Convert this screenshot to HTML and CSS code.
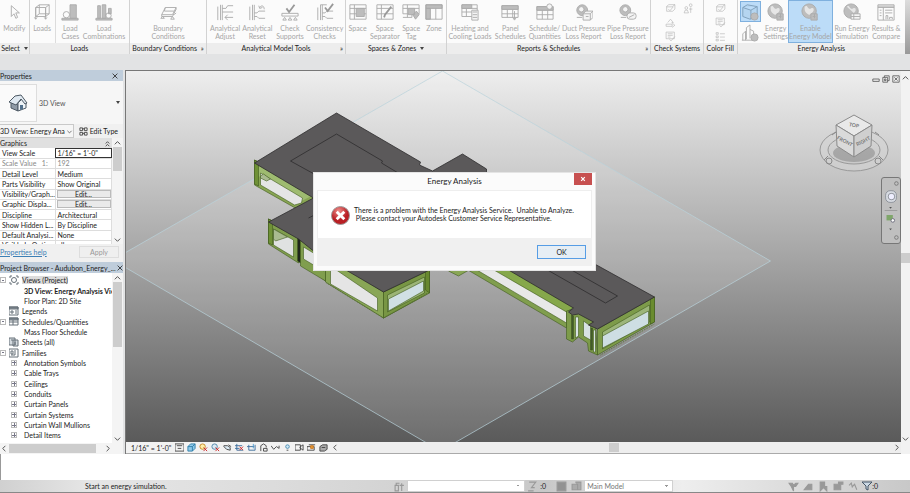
FILE: index.html
```
<!DOCTYPE html>
<html lang="en">
<head>
<meta charset="utf-8">
<title>Energy Analysis</title>
<link rel="stylesheet" href="styles.css">
</head>
<body>
<svg class="defs" aria-hidden="true">
  <symbol id="i-cursor" viewBox="0 0 20 20"><path d="M7 3v12l3-3 2 5 2-1-2-5h4z"/></symbol>
  <symbol id="i-loads" viewBox="0 0 20 20"><path d="M3 5l4-3h11v10l-4 3H3zM3 5h11l4-3M14 5v10M7 2v10h11M3 15l4-3M3 5v13M14 5v13M1.500 16L3 18l1.500-2M12.500 16l1.500 2 1.500-2"/></symbol>
  <symbol id="i-cases" viewBox="0 0 20 20"><path class="s" d="M10 2h7v15h-7zM1 17h18v2H1z"/><circle cx="6" cy="13" r="3.500"/></symbol>
  <symbol id="i-combo" viewBox="0 0 20 20"><path class="s" d="M3 3h3v14H3zM8 2h4v15H8zM15 6h3v6h-3zM1 17h18v2H1z"/><circle cx="15" cy="14" r="3"/></symbol>
  <symbol id="i-boundary" viewBox="0 0 20 20"><path d="M3 13l4-8h12l-4 8zM7 5l-1 4h11M3 13v2h12l4-8V5M2 17l2-2 2 2zM13 18l2-3 2 3zM17 13l2-2"/></symbol>
  <symbol id="i-adjust" viewBox="0 0 20 20"><path d="M2 4v15M5 2v17M7 2v17M7 6h4l2-3h6M7 10h12M10 16h9M13 13l-3 3 3 3"/></symbol>
  <symbol id="i-reset" viewBox="0 0 20 20"><path d="M2 4v15M5 2v17M7 2v17M7 11h3l2-2h7M7 15h3l2 2h7M12 3l1 3 3-1M13 5c2-3 5-2 5 2"/></symbol>
  <symbol id="i-check" viewBox="0 0 20 20"><path class="b" d="M6 6l3 4 6-8"/><path d="M1 11.500h18v3H1zM2 19l2-3 2 3zM8 19l2-3 2 3zM14 19l2-3 2 3z"/></symbol>
  <symbol id="i-consist" viewBox="0 0 20 20"><path d="M2 5v14M5 2v17M7 2v17M7 11h3l2-2h7M7 15h3l2 2h7M5 2h7"/><path class="b" d="M10 5l3 4 6-8"/></symbol>
  <symbol id="i-space" viewBox="0 0 20 20"><path d="M1 2h18v16H1zM1 6h18M6 2v16M1 12h18"/><path class="s" d="M8 6h9v9H8z"/></symbol>
  <symbol id="i-sep" viewBox="0 0 20 20"><path d="M1 2h18v16H1zM1 6h18M6 2v16M1 12h18"/><path class="b" d="M17 4l-7 9-1 3"/></symbol>
  <symbol id="i-tag" viewBox="0 0 20 20"><path d="M1 2h18v10H1zM1 6h18M6 2v14M1 16h10V7"/><path class="s" d="M7 6h7v7H7zM12 13l4-4 3 4-4 5z"/></symbol>
  <symbol id="i-zone" viewBox="0 0 20 20"><path class="s" d="M1 2h18v4H1zM1 6h5v12H1z"/><path d="M1 2h18v16H1zM12 6v12"/></symbol>
  <symbol id="i-calc" viewBox="0 0 20 20"><path d="M1 2h17v13H1zM1 6h17M6 2v13M1 10h17"/><path class="s" d="M1 2h11v4H1z"/><path class="p" d="M12 8h7v11h-7z"/><path d="M13 10h5M13 13h5M13 16h5"/></symbol>
  <symbol id="i-panel" viewBox="0 0 20 20"><path d="M1 3h18v13H1zM1 7h18M7 3v13M13 3v13M1 12h18M15 9v9M13 16l2 3 2-3"/><path class="s" d="M1 3h18v4H1z"/></symbol>
  <symbol id="i-sched" viewBox="0 0 20 20"><path d="M1 4h18v14H1zM1 8h18M7 8v10M13 8v10M1 13h18"/><path class="s" d="M1 4h18v4H1z"/><circle class="p" cx="15" cy="4" r="3"/></symbol>
  <symbol id="i-duct" viewBox="0 0 20 20"><circle class="s" cx="8" cy="8" r="6"/><circle class="p" cx="7" cy="7" r="3"/><path class="p" d="M9 12l3-3h8v7l-3 3H9zM9 12h8v7M17 12l3-3"/><path d="M2 16h6M12 15h3"/></symbol>
  <symbol id="i-pipe" viewBox="0 0 20 20"><circle class="s" cx="7" cy="8" r="6"/><circle class="p" cx="7" cy="7" r="3"/><rect class="p" x="9" y="11" width="10" height="7" rx="3"/><path d="M2 16h6M11 16l6-3"/></symbol>
  <symbol id="i-small" viewBox="0 0 20 20"><path d="M3 6l4-3h11v8l-4 4H3zM3 7h10l5-4M6 11l3 3 6-7"/></symbol>
  <symbol id="i-persons" viewBox="0 0 20 20"><circle cx="6" cy="9" r="2.500"/><circle cx="14" cy="4" r="2.500"/><path d="M2 18l2-5h4l2 5zM14 8v10M11 11h6"/></symbol>
  <symbol id="i-arrows" viewBox="0 0 20 20"><path d="M5 10l5-6 5 6h-3M2 13h11v4H2zM13 11l5 4-5 4"/></symbol>
  <symbol id="i-list" viewBox="0 0 20 20"><path d="M2 3h4v3H2zM2 9h4v3H2zM2 15h4v3H2zM9 5h9M9 11h9M9 17h9"/></symbol>
  <symbol id="i-doc" viewBox="0 0 20 20"><path d="M2 2h15v12H2zM5 5h9M5 8h9M5 11h5M8 15l3 3 7-8"/></symbol>
  <symbol id="i-mass" viewBox="0 0 20 20"><path class="blue" d="M2 5l5-3 11 2v11l-8 3-8-3zM2 5l9 3 7-4M11 8v10"/><circle class="s" cx="15" cy="15" r="4"/></symbol>
  <symbol id="i-city" viewBox="0 0 20 20"><path d="M2 18v-7l3-3v10M6 17V4l4-3v15M10 6l4 2v5M1 18h13"/><circle class="s" cx="15" cy="15" r="4"/></symbol>
  <symbol id="i-globe" viewBox="0 0 20 20"><circle class="s" cx="9" cy="9" r="8"/><path class="w" d="M4 4c4-3 3 4 7 2s4 3 1 5-2 3-5 1-3-4-3-8"/><path class="s" d="M11 12h7v7h-7z"/><path d="M13 15h3M15 12v5"/></symbol>
  <symbol id="i-run" viewBox="0 0 20 20"><circle class="s" cx="9" cy="9" r="8"/><path class="w" d="M4 4c4-3 3 4 7 2s4 3 1 5"/><path class="p" d="M9 12h10v6H9z"/><path d="M9 15h10M12 12v6"/></symbol>
  <symbol id="i-result" viewBox="0 0 20 20"><path d="M1 2h18v17H1zM1 5h18M1 3.500h18M7 5v14M3 8h2M3 11h2M3 14h2M9 8h8M9 11h8M10 18v-4h2v4M14 18v-2h3v2"/></symbol>
  <symbol id="i-close" viewBox="0 0 10 10"><path d="M2 2l6 6M8 2l-6 6"/></symbol>
  <symbol id="i-up" viewBox="0 0 10 10"><path d="M2 7l3-3 3 3"/></symbol>
  <symbol id="i-down" viewBox="0 0 10 10"><path d="M2 4l3 3 3-3"/></symbol>
  <symbol id="i-left" viewBox="0 0 10 10"><path d="M6 2L3 5l3 3"/></symbol>
  <symbol id="i-right" viewBox="0 0 10 10"><path d="M4 2l3 3-3 3"/></symbol>
</svg>

<header class="ribbon">
  <section class="panel select"><div class="tools"><button class="tool"><svg><use href="#i-cursor"/></svg>Modify</button></div><h2>Select <i class="tri"></i></h2></section>
  <section class="panel loads"><div class="tools"><button class="tool ruled"><svg><use href="#i-loads"/></svg>Loads</button><button class="tool"><svg><use href="#i-cases"/></svg>Load<br>Cases</button><button class="tool"><svg><use href="#i-combo"/></svg>Load<br>Combinations</button></div><h2>Loads</h2></section>
  <section class="panel boundary"><div class="tools"><button class="tool"><svg><use href="#i-boundary"/></svg>Boundary<br>Conditions</button></div><h2>Boundary Conditions <span class="launch">»</span></h2></section>
  <section class="panel analytic"><div class="tools"><button class="tool"><svg><use href="#i-adjust"/></svg>Analytical<br>Adjust</button><button class="tool"><svg><use href="#i-reset"/></svg>Analytical<br>Reset</button><button class="tool"><svg><use href="#i-check"/></svg>Check<br>Supports</button><button class="tool"><svg><use href="#i-consist"/></svg>Consistency<br>Checks</button></div><h2>Analytical Model Tools <span class="launch">»</span></h2></section>
  <section class="panel spaces"><div class="tools"><button class="tool"><svg><use href="#i-space"/></svg>Space</button><button class="tool"><svg><use href="#i-sep"/></svg>Space<br>Separator</button><button class="tool"><svg><use href="#i-tag"/></svg>Space<br>Tag</button><button class="tool"><svg><use href="#i-zone"/></svg>Zone</button></div><h2>Spaces &amp; Zones <i class="tri"></i></h2></section>
  <section class="panel reports"><div class="tools"><button class="tool"><svg><use href="#i-calc"/></svg>Heating and<br>Cooling Loads</button><button class="tool"><svg><use href="#i-panel"/></svg>Panel<br>Schedules</button><button class="tool"><svg><use href="#i-sched"/></svg>Schedule/<br>Quantities</button><button class="tool"><svg><use href="#i-duct"/></svg>Duct Pressure<br>Loss Report</button><button class="tool"><svg><use href="#i-pipe"/></svg>Pipe Pressure<br>Loss Report</button></div><h2>Reports &amp; Schedules <span class="launch">»</span></h2></section>
  <section class="panel check"><div class="tools mini"><button aria-label="Check duct systems"><svg><use href="#i-small"/></svg></button><button aria-label="Check circuits"><svg><use href="#i-persons"/></svg></button><button aria-label="Check pipe systems"><svg><use href="#i-arrows"/></svg></button><span></span><button aria-label="Show disconnects"><svg><use href="#i-doc"/></svg></button></div><h2>Check Systems</h2></section>
  <section class="panel fill"><div class="tools mini"><button aria-label="Duct legend"><svg><use href="#i-small"/></svg></button><button aria-label="Pipe legend"><svg><use href="#i-doc"/></svg></button><button aria-label="Color fill legend"><svg><use href="#i-list"/></svg></button></div><h2>Color Fill</h2></section>
  <section class="panel energy"><div class="tools"><div class="pair"><button class="on" aria-label="Use conceptual masses"><svg><use href="#i-mass"/></svg></button><button aria-label="Use building elements"><svg><use href="#i-city"/></svg></button></div><button class="tool"><svg><use href="#i-globe"/></svg>Energy<br>Settings</button><button class="tool on"><svg><use href="#i-globe"/></svg>Enable<br>Energy Model</button><button class="tool"><svg><use href="#i-run"/></svg>Run Energy<br>Simulation</button><button class="tool"><svg><use href="#i-result"/></svg>Results &amp;<br>Compare</button></div><h2>Energy Analysis</h2></section>
  <div class="ribbon-end"></div>
</header>

<main class="work">
  <aside class="side">
    <section class="props">
      <div class="bar"><h3>Properties</h3><button aria-label="Close properties"><svg class="ln"><use href="#i-close"/></svg></button></div>
      <div class="type">
        <div class="thumb"><svg viewBox="0 0 20 20"><path fill="#8f9aa6" stroke="#4d5964" d="M3 9v6l7 3V9L6 5z"/><path fill="#eef3f7" stroke="#4d5964" d="M10 10l4-4 4 4v5l-8 3z"/><path fill="#dfe8f0" stroke="#4d5964" d="M1 9l6-6 6-1 6 8-2 1-4-5-5 6z"/><path fill="#51708c" d="M12 12h3v4l-3 1z"/></svg></div>
        <span>3D View</span><i class="tri"></i>
      </div>
      <div class="inst"><button class="combo" aria-label="View instance">3D View: Energy Ana <svg class="ln"><use href="#i-down"/></svg></button><button class="edit"><svg class="ln" viewBox="0 0 10 10"><path d="M1 1h3v3H1zM1 6h3v3H1zM6 1h3v3H6zM6 6h3v3H6zM4 2h2M4 7h2"/></svg>Edit Type</button></div>
      <div class="proplist">
        <div class="propbody">
          <h4>Graphics <svg class="ln" viewBox="0 0 10 10"><path d="M3 5l2-2 2 2M3 8l2-2 2 2"/></svg></h4>
          <table>
            <tr><th>View Scale</th><td class="boxed">1/16" = 1'-0"</td></tr>
            <tr class="dim"><th>Scale Value &nbsp; 1:</th><td>192</td></tr>
            <tr><th>Detail Level</th><td>Medium</td></tr>
            <tr><th>Parts Visibility</th><td>Show Original</td></tr>
            <tr><th>Visibility/Graph...</th><td><button>Edit...</button></td></tr>
            <tr><th>Graphic Displa...</th><td><button>Edit...</button></td></tr>
            <tr><th>Discipline</th><td>Architectural</td></tr>
            <tr><th>Show Hidden L...</th><td>By Discipline</td></tr>
            <tr><th>Default Analysi...</th><td>None</td></tr>
            <tr><th>Visible In Opti...</th><td>all</td></tr>
          </table>
        </div>
        <div class="vscroll"><svg class="ln"><use href="#i-up"/></svg><i></i><svg class="ln"><use href="#i-down"/></svg></div>
      </div>
      <div class="help"><a href="#help">Properties help</a><button disabled>Apply</button></div>
    </section>
    <section class="browser">
      <div class="bar"><h3>Project Browser - Audubon_Energy_...</h3><button aria-label="Close browser"><svg class="ln"><use href="#i-close"/></svg></button></div>
      <div class="treebox">
        <ul class="tree">
          <li><i class="pm"></i><svg class="ln" viewBox="0 0 10 10"><circle cx="5" cy="5" r="2.500"/><path d="M1 3V1h2M7 1h2v2M9 7v2H7M3 9H1V7"/></svg><span class="sel">Views (Project)</span></li>
          <li class="leaf"><b>3D View: Energy Analysis View</b></li>
          <li class="leaf">Floor Plan: 2D Site</li>
          <li class="flat"><svg class="ln" viewBox="0 0 10 10"><path fill="#8b949c" d="M0 1h9v2H0z"/><path d="M0 1h9v8H0zM2 5h2v2H2zM6 5h2M6 7h2"/></svg>Legends</li>
          <li><i class="pm"></i><svg class="ln" viewBox="0 0 10 10"><path fill="#8b949c" d="M0 1h9v2H0z"/><path d="M0 1h9v7H0zM0 5h9M4 3v5"/></svg>Schedules/Quantities</li>
          <li class="leaf">Mass Floor Schedule</li>
          <li class="flat"><svg class="ln" viewBox="0 0 10 10"><path fill="#d5dbe0" d="M0 1h6v7H0zM4 3h5v6H4z"/><path d="M6 5v3M2 3h2"/></svg>Sheets (all)</li>
          <li><i class="pm"></i><svg class="ln" viewBox="0 0 10 10"><path d="M0 1h9v8H0zM2 3h2v3H2zM6 2v5H2"/></svg>Families</li>
          <li class="kid"><i class="pm plus"></i>Annotation Symbols</li>
          <li class="kid"><i class="pm plus"></i>Cable Trays</li>
          <li class="kid"><i class="pm plus"></i>Ceilings</li>
          <li class="kid"><i class="pm plus"></i>Conduits</li>
          <li class="kid"><i class="pm plus"></i>Curtain Panels</li>
          <li class="kid"><i class="pm plus"></i>Curtain Systems</li>
          <li class="kid"><i class="pm plus"></i>Curtain Wall Mullions</li>
          <li class="kid"><i class="pm plus"></i>Detail Items</li>
          <li class="kid"><i class="pm plus"></i>Duct Systems</li>
        </ul>
        <div class="vscroll"><svg class="ln"><use href="#i-up"/></svg><i></i><svg class="ln"><use href="#i-down"/></svg></div>
      </div>
      <div class="hscroll"><svg class="ln"><use href="#i-left"/></svg><i></i><svg class="ln"><use href="#i-right"/></svg></div>
    </section>
  </aside>

  <section class="view">
    <div class="stage">
      <div class="canvas">
        <svg class="scene" viewBox="125 71 776 371" preserveAspectRatio="xMidYMid slice" role="img" aria-label="Building model">
          <polygon points="112,260 442,71 770,261 440,451" fill="#fff" fill-opacity=".12" stroke="#b9d3dc" stroke-opacity=".7"/>
          <g stroke="#3f5a1c" stroke-width=".6" stroke-linejoin="round">
            <path fill="#88a553" d="M254 160v25l46 26 13-8v-12z"/>
            <path fill="#9ebb70" d="M257 165l54 31-10 5-43-25z" stroke="none"/>
            <path fill="#e4e5e5" d="M260 173l42 25-1 5-7 2-34-20z"/>
            <path fill="#a9bb90" d="M260 176l3-2 7 5-4 2-6-3z"/>
            <path fill="#6f9136" d="M254 160l4 2v24l-4-2z"/>
            <path fill="#88a553" d="M268 219v24l29 17 3 2 25 19v-9l58 46 45-25 1-27-46 22-70-48-15-5z"/>
            <path fill="#809e4e" d="M268 219l30 17v27l-30-19z"/>
            <path fill="#6f9136" d="M268 219l4 2v24l-4-2z"/>
            <path fill="#e0e2e2" d="M273 229l20 11v17l-20-12z"/>
            <path fill="#a9bb90" d="M273 229l14 8-12 4-2-2z"/>
            <path fill="#1e251a" d="M297 237h3v26l-3-2z"/>
            <path fill="#809e4e" d="M300 240l25 8v33l-25-15z"/>
            <path fill="#e0e2e2" d="M303 247l20 12v12l-20-12z"/>
            <path fill="#89a656" d="M325 255l58 37v26l-58-36z"/>
            <path fill="#e5e5e5" d="M330 266l47 32v13l-47-27z"/>
            <path fill="#789644" d="M383 292l46-22v23l-46 25z"/>
            <path fill="#9bb576" d="M387 295l37-18v16l-37 19z"/>
            <path fill="#d0e0e4" d="M388 299l35-18v10l-35 20z"/>
            <path fill="#68882f" d="M425 271l4-2v24l-4-3z"/>
            <path fill="#89a656" d="M446 268h26l-14 8-10-5z"/>
            <path fill="#809e4e" d="M464 268h12l90 54v6z"/>
            <path fill="#e8e8e8" d="M473 268h19l74 43v12z"/>
            <path fill="#86a84b" d="M490 268h20l64 39-8 5z"/>
            <path fill="#7d9b4a" d="M566 311l9-2 20 14 2 32-9-4-1-8-9-6-6 5-6-3z"/>
            <path fill="#41582b" d="M571 315v24h2v-23zM590 328v22h2v-22z"/>
            <path fill="#d8e2e3" d="M575 317h3v19l-3 2zM583 321l7 5v14l-7-4zM593 330h2v22h-2z"/>
            <path fill="#7d9b4a" d="M597 329l57-32v25l-57 33z"/>
            <path fill="#9cb57a" d="M602 332l47-27v17l-47 27z"/>
            <path fill="#cedee3" d="M602 336l46-25v13l-46 24z"/>
            <path fill="#6a8c2f" d="M650 299l4-2v25l-4 2z"/>
          </g>
          <path d="M600 355l54-31M326 283l57 35 44-25" fill="none" stroke="#587432" stroke-dasharray="1 1"/>
          <g fill="#5b595a" stroke="#2d2c2d" stroke-width=".8">
            <path d="M336 113l84 49-1 3 13 6 30-17 24 15v35l110 61 58 32-57 32-9-4 5-3-15-8-6 1-4-3 5-4-65-38-60-20-19 20-46 22-70-41-15-12-30-17 45-24-59-35z"/>
            <path fill="none" d="M336 134l46 27-1 2 40 24M336 134l-46 27 40 22M547 270l58 33 12-7-46-26M308 218l6-3"/>
          </g>
        </svg>
        <div class="wins"><svg class="ln" viewBox="0 0 10 10"><path d="M1 5h8v3H1z"/></svg><svg class="ln" viewBox="0 0 10 10"><path d="M1 3h6v6H1zM3 3V1h6v6H7M3 5h2v2H3z"/></svg><svg class="ln" viewBox="0 0 10 10"><path d="M1 1h8v8H1zM3 3l4 4M7 3L3 7"/></svg></div>
        <svg class="cube" viewBox="0 0 70 64" role="img" aria-label="View cube">
          <g fill="#d4d4d4" fill-opacity=".45" stroke="#999"><path fill-rule="evenodd" d="M1 37a34 21 0 1 0 68 0a34 21 0 1 0-68 0zM9 37a26 14 0 1 1 52 0a26 14 0 1 1-52 0z"/></g>
          <ellipse cx="35" cy="40" rx="21" ry="9" fill="#777" opacity=".45"/>
          <g stroke="#8b8b8b"><path fill="#e9e9e9" d="M35 2l18 10-18 11-18-11z"/><path fill="#dadada" d="M17 12l18 11v21L18 33z"/><path fill="#cfcfcf" d="M53 12L35 23v21l17-11z"/></g>
          <text x="35" y="14" transform="rotate(12 35 12)">TOP</text><text x="26" y="30" transform="rotate(28 26 28)">FRONT</text><text x="44" y="30" transform="rotate(-28 44 28)">RIGHT</text>
          <g fill="none" stroke="#888"><circle cx="10" cy="48" r="3"/><circle cx="59" cy="48" r="3"/><path d="M5 47l4-4M64 47l-4-4M13 22l4-3M56 19l4 3"/></g>
        </svg>
        <div class="nav">
          <svg viewBox="0 0 20 68"><g fill="none" stroke="#777"><circle cx="16" cy="4" r="2"/><circle cx="16" cy="64" r="2"/></g><rect x="4" y="12" width="12" height="13" rx="5" fill="#d7dbe2" stroke="#8a8e96"/><rect x="7" y="15" width="7" height="7" rx="3" fill="#eef" stroke="#8a8e96"/><path d="M3 34h14" stroke="#999"/><path fill="#7fa66a" d="M5 39h7v6H5z"/><circle cx="12" cy="45" r="2" fill="#fff" stroke="#667"/><path d="M8 30h3l-1.500 2zM8 54h3l-1.500 2z" fill="#555"/></svg>
        </div>
      </div>
      <div class="vbar"><div class="viewctl">
        <span>1/16" = 1'-0"</span>
        <svg class="ln" viewBox="0 0 10 10"><path d="M0 1h10v8H0zM2 3h6M3 6h4"/></svg>
        <svg class="ln" viewBox="0 0 10 10"><path fill="#8fc9ea" stroke="#2c7da8" d="M1 4l3-3h5v5L6 9H1zM1 4h5v5M6 4l3-3"/></svg>
        <svg class="ln" viewBox="0 0 10 10"><circle cx="4" cy="4" r="3" fill="#fff0a8" stroke="#c48520"/><path stroke="#c22" d="M5 5l4 4M9 5L5 9"/></svg>
        <svg class="ln" viewBox="0 0 10 10"><circle cx="4" cy="4" r="3" fill="#dbeaf4" stroke="#4d82a5"/><path stroke="#c22" d="M5 5l4 4M9 5L5 9"/></svg>
        <svg class="ln" viewBox="0 0 10 10"><path fill="#dbeaf4" d="M1 3h4l3 2v3L4 7 1 4zM6 2l3 2"/></svg>
        <svg class="ln" viewBox="0 0 10 10"><path stroke="#3b6d9c" d="M0 3h8M2 1v7h7M0 6h5"/><path stroke="#c22" d="M5 4l4 4M9 4L5 8"/></svg>
        <svg class="ln" viewBox="0 0 10 10"><path stroke="#3b6d9c" d="M0 4h8M2 2v6h7V2"/><path stroke="#4a9ad0" d="M7 1v5"/></svg>
        <svg class="ln" viewBox="0 0 10 10"><path d="M2 9V3l3-2 3 2v2M5 6h4v3H5z"/></svg>
        <svg class="ln" viewBox="0 0 10 10"><path d="M0 3l3 4 3-3 3 2V3"/></svg>
        <svg class="ln" viewBox="0 0 10 10"><circle cx="5" cy="4" r="2" fill="#cfe9f7" stroke="#4a8ab0"/><path d="M4 8h2"/></svg>
        <svg class="ln" viewBox="0 0 10 10"><path d="M0 2h6v6H0zM6 4l3-2v6L5 5"/></svg>
        <svg class="ln" viewBox="0 0 10 10"><path d="M0 4h8v4H0zM2 2h7"/><path fill="#e99a35" stroke="#c57722" d="M4 3h3v3H4z"/></svg>
        <svg class="ln" viewBox="0 0 10 10"><path fill="#aaa" d="M1 4l3-2h5v5L6 9H1zM3 5h4"/></svg>
        <svg class="ln"><use href="#i-left"/></svg></div>
        <div class="track"><i></i><svg class="ln"><use href="#i-right"/></svg></div>
      </div>
    </div>
    <div class="rail"><svg class="ln"><use href="#i-up"/></svg><i></i><svg class="ln"><use href="#i-down"/></svg></div>
  </section>
</main>

<div class="log"></div>
<footer class="status">
  <span class="msg">Start an energy simulation.</span>
  <svg class="ln g" viewBox="0 0 10 10"><path d="M1 4h3v5H1zM2 4V2h3M7 2v7M5 4h4"/></svg>
  <select aria-label="Workset" class="ws"><option></option></select>
  <svg class="ln g" viewBox="0 0 10 10"><path d="M2 1h6L4 6h3M1 9h5"/></svg><span class="num">:0</span>
  <svg class="g" viewBox="0 0 10 10"><path fill="#929292" d="M1 1h8v8H1z"/></svg>
  <svg class="ln g" viewBox="0 0 10 10"><path fill="#aaa" d="M1 3h5v5H1zM4 1h5v7H6"/></svg>
  <select aria-label="Design option" class="opt"><option>Main Model</option></select>
  <div class="picks">
    <svg class="ln g" viewBox="0 0 10 10"><path fill="#999" d="M1 2h3l1 2 2-2h2L7 5 5 5v4L3 5z"/></svg>
    <svg class="ln g" viewBox="0 0 10 10"><path fill="#999" d="M1 8l4-5h3v5z"/></svg>
    <svg class="ln g" viewBox="0 0 10 10"><path fill="#999" d="M2 1h4v4h2v4L5 6 2 9z"/></svg>
    <svg class="ln g" viewBox="0 0 10 10"><path fill="#999" d="M1 3h4V1h4v2H7v5H1z"/></svg>
    <svg class="ln g" viewBox="0 0 10 10"><path d="M1 4l2-2 1 4M4 5l2-2 2 5"/></svg>
    <svg class="ln funnel" viewBox="0 0 10 10"><path fill="#cbd8e4" d="M0 1h10L6 5v4L4 8V5z"/></svg><span>:0</span>
  </div>
</footer>

<div class="dialog" role="alertdialog" aria-labelledby="dt">
  <div class="dtitle"><h1 id="dt">Energy Analysis</h1><button class="x" aria-label="Close"><svg viewBox="0 0 10 10"><path d="M2 2l6 6M8 2l-6 6" stroke="#fff" stroke-width="2"/></svg></button></div>
  <div class="dbody">
    <svg viewBox="0 0 20 20"><defs><radialGradient id="r" cx=".4" cy=".25"><stop offset="0" stop-color="#ee8d89"/><stop offset="1" stop-color="#b81f24"/></radialGradient></defs><circle cx="10" cy="10" r="9.500" fill="url(#r)" stroke="#9c9c9c"/><path d="M6 6l8 8M14 6l-8 8" stroke="#fff" stroke-width="3"/></svg>
    <p>There is a problem with the Energy Analysis Service.&nbsp; Unable to Analyze.<br>&nbsp;Please contact your Autodesk Customer Service Representative.</p>
  </div>
  <div class="dfoot"><button>OK</button></div>
</div>
</body>
</html>
```
FILE: styles.css
```
* { box-sizing: border-box; }
body {
  margin: 0; min-height: 100vh; display: flex; flex-direction: column; position: relative; overflow: hidden;
  background: #e2e3e4; color: #222; font: 7px/8px Lato, "Open Sans", sans-serif;
}
button, select { font: inherit; color: inherit; border: 0; background: none; padding: 0; margin: 0; }
h1, h2, h3, h4, p, ul { margin: 0; padding: 0; font-weight: 400; font-size: inherit; }
.defs { display: none; }
svg { fill: none; flex: none; }
.ln { width: 9px; height: 9px; stroke: #444; }
.s { fill: #bdbdbd; }
.p { fill: #f4f4f4; }
.b { stroke-width: 2; stroke: #999; }
.w { fill: #e6e6e6; stroke: none; }
.blue { fill: #b5d5f0; stroke: #7d9db8; }
.tri { display: inline-block; border: 2px solid transparent; border-top: 3px solid #444; border-bottom: 0; margin-left: 2px; vertical-align: 1px; }

.ribbon { display: flex; height: 54px; background: #fbfbfb; }
.panel { display: flex; flex-direction: column; min-width: 0; border-right: 1px solid #d2d2d2; }
.panel h2 { height: 11px; line-height: 11px; text-align: center; background: #ededed; white-space: nowrap; position: relative; }
.launch { margin-left: 2px; }
.analytic .launch, .reports .launch { position: absolute; right: 2px; }
.tools { flex: 1; display: grid; }
.tool { display: flex; flex-direction: column; align-items: center; justify-content: flex-start; padding-top: 3px; color: #a6a6a6; white-space: nowrap; min-width: 0; text-align: center; }
.tools svg { stroke: #aaa; }
.tool svg { width: 18px; height: 18px; margin-bottom: 3px; }
.ruled { border-right: 1px solid #dcdcdc; }
.select { flex: 29 1 0; }
.loads { flex: 100 1 0; }
.loads .tools { grid-template-columns: 26fr 30fr 38fr; padding-right: 6px; }
.boundary { flex: 77 1 0; }
.analytic { flex: 139 1 0; }
.analytic .tools { grid-template-columns: 32fr 33fr 33fr 37fr; padding: 0 2px; }
.spaces { flex: 101 1 0; }
.spaces .tools { grid-template-columns: 23fr 31fr 21fr 24fr; }
.reports { flex: 205 1 0; }
.reports .tools { grid-template-columns: 46fr 35fr 34fr 44fr 45fr; }
.check { flex: 52 1 0; }
.fill { flex: 33 1 0; }
.energy { flex: 169 1 0; border-right: 0; }
.energy .tools { grid-template-columns: 26fr 25fr 45fr 39fr 30fr; padding-right: 4px; }
.tools.mini { grid-auto-rows: 14px; justify-content: center; padding-top: 1px; }
.check .mini { grid-template-columns: 18px 18px; justify-content: start; padding-left: 10px; }
.mini button { display: grid; place-items: center; }
.mini svg { width: 11px; height: 11px; }
.pair { display: grid; grid-template-rows: 21px 21px; padding: 1px 2px 0; }
.pair button { display: grid; place-items: center; }
.pair svg { width: 18px; height: 18px; }
.on { background: #bcdcf8; outline: 1px solid #7fb0de; outline-offset: -1px; }
.ribbon-end { flex: 5 1 0; background: linear-gradient(#ddd, #999); }

.work { flex: 1; display: flex; margin-top: 16px; min-height: 0; }
.side { width: 125px; display: flex; flex-direction: column; background: #f0f0f0; border-right: 2px solid #e2e3e4; flex: none; }
.bar { display: flex; justify-content: space-between; align-items: center; height: 11px; background: #bfcddb; white-space: nowrap; }
.bar button { width: 12px; height: 8px; flex: none; }
.bar .ln { width: 8px; height: 8px; stroke: #222; display: block; }
.type { display: flex; align-items: center; height: 43px; background: #f6f6f6; padding-right: 3px; color: #555; }
.type .tri { margin-left: auto; }
.thumb { width: 37px; height: 38px; border: 1px solid #ddd; border-left: 0; display: grid; place-items: center; margin-right: 2px; background: #fafafa; }
.thumb svg { width: 20px; height: 20px; }
.inst { display: flex; height: 14px; align-items: stretch; justify-content: space-between; padding-right: 5px; }
.combo { width: 74px; display: flex; align-items: center; justify-content: space-between; white-space: nowrap; border: 1px solid #c9c9c9; border-left: 0; background: #f6f6f6; }
.combo .ln { width: 7px; height: 7px; }
.edit { display: flex; align-items: center; gap: 2px; white-space: nowrap; }
.proplist { display: flex; height: 106px; overflow: hidden; }
.propbody { flex: 1; }
.propbody h4 { display: flex; justify-content: space-between; align-items: center; height: 10px; background: #e0e0e0; }
.propbody table { width: 100%; height: 103px; border-collapse: collapse; table-layout: fixed; background: #fff; }
.propbody th, .propbody td { padding: 0 0 0 2px; height: 10px; line-height: 8px; text-align: left; font-weight: 400; white-space: nowrap; border: 1px solid #ddd; border-left: 0; border-top: 0; overflow: hidden; }
.propbody th { width: 55px; }
.propbody .boxed { outline: 1px solid #333; outline-offset: -1px; }
.propbody td button { display: block; width: 54px; height: 8px; line-height: 7px; background: #eaeaea; border: 1px solid #bbb; margin-left: -1px; }
.propbody .dim { color: #888; }
.vscroll { width: 11px; display: flex; flex-direction: column; align-items: center; justify-content: space-between; background: #f4f4f4; }
.vscroll i { width: 9px; height: 24px; background: #cdcdcd; margin-bottom: auto; }
.help { display: flex; justify-content: space-between; align-items: center; height: 18px; padding: 0 4px 3px 0; }
.help a { color: #3c7fb5; }
.help button { width: 40px; height: 12px; border: 1px solid #ddd; color: #999; background: #efefef; }
.browser { flex: 1; display: flex; flex-direction: column; min-height: 0; }
.treebox { height: 169px; flex: 1 0 169px; display: flex; overflow: hidden; background: #fff; }
.tree { flex: 1; min-width: 0; height: 178px; display: grid; grid-auto-rows: 1fr; list-style: none; overflow: hidden; padding-top: 2px; }
.tree li { display: flex; align-items: center; gap: 3px; white-space: nowrap; }
.tree .leaf { padding-left: 24px; }
.tree .leaf b { font-weight: 700; }
.tree .flat { padding-left: 9px; }
.tree .kid { padding-left: 11px; gap: 7px; }
.tree .ln { width: 10px; height: 10px; stroke: #667078; }
.sel { background: #dcdcdc; }
.pm { width: 6px; height: 6px; border: 1px solid #bbb; flex: none; background: linear-gradient(#778, #778) center / 2px 1px no-repeat; }
.plus { background: linear-gradient(#778, #778) center / 4px 1px no-repeat, linear-gradient(#778, #778) center / 1px 4px no-repeat; }
.treebox .vscroll i { height: 65px; }
.hscroll { display: flex; align-items: center; height: 11px; background: #f4f4f4; padding-right: 11px; }
.hscroll i { width: 87px; height: 9px; background: #cdcdcd; margin-right: auto; }

.view { flex: 1; display: flex; min-width: 0; border-top: 1px solid #777; border-left: 1px solid #777; }
.stage { flex: 1; display: flex; flex-direction: column; min-width: 0; }
.canvas { flex: 1; position: relative; background: linear-gradient(#eee, #a5a5a5 50%, #5a5a5a); overflow: hidden; }
.scene { position: absolute; inset: 0; width: 100%; height: 100%; }
.wins { position: absolute; right: 1px; top: 4px; display: flex; gap: 2px; }
.wins .ln { width: 8px; height: 8px; stroke: #555; }
.cube { position: absolute; right: 12px; top: 42px; width: 70px; height: 64px; }
.cube text { font-size: 5px; font-weight: 700; fill: #777; text-anchor: middle; }
.nav { position: absolute; right: 0; top: 106px; width: 20px; height: 67px; border: 1px solid #777; border-radius: 3px; background: #bfbfbf; }
.nav svg { width: 18px; height: 65px; }
.vbar { display: flex; height: 12px; background: #eee; border-bottom: 1px solid #aaa; }
.viewctl { display: flex; align-items: center; gap: 3px; padding-left: 5px; background: #f2f2f2; }
.viewctl span { margin-right: 1px; white-space: nowrap; }
.track { flex: 1; display: flex; align-items: center; justify-content: flex-end; }
.track i { width: 10px; height: 9px; background: #cdcdcd; margin-right: auto; margin-left: 48%; }
.rail { width: 9px; display: flex; flex-direction: column; align-items: center; padding: 2px 0 11px; background: #f2f2f2; }
.rail i { width: 9px; height: 10px; background: #cdcdcd; margin: 171px 0 auto; }

.log { height: 26px; background: #fff; border-left: 1px solid #999; }
.status { height: 13px; display: flex; align-items: center; background: linear-gradient(90deg, #d0d0d0, #e6e6e6 10%, #dcdcdc 30%, #c8c8c8 60%, #eee 75%, #c8c8c8); border-bottom: 1px solid #888; white-space: nowrap; }
.msg { flex: 3 1 0; padding-left: 85px; }
.g { width: 11px; height: 11px; stroke: #999; margin: 0 2px; }
.status select {
  appearance: none; height: 12px; color: #777; border: 1px solid #d0d0d0; padding-left: 2px;
  background: linear-gradient(45deg, transparent 50%, #999 50%) right 6px center / 2px 2px no-repeat, linear-gradient(-45deg, transparent 50%, #999 50%) right 4px center / 2px 2px no-repeat, #fff;
}
.ws { width: 118px; }
.opt { width: 89px; }
.num { color: #222; margin-right: 8px; }
.picks { flex: 2 1 0; display: flex; justify-content: flex-end; padding-right: 32px; align-items: center; }
.funnel { width: 10px; height: 10px; stroke: #456; margin-left: 1px; }

.dialog { position: absolute; left: 313px; top: 172px; width: 283px; background: #fbfbfb; border: 1px solid #e4e4e4; padding: 0 3px 4px; }
.dtitle { display: flex; height: 17px; align-items: flex-start; }
.dtitle h1 { flex: 1; text-align: center; font-size: 8px; line-height: 17px; padding-left: 18px; }
.x { width: 18px; height: 12px; background: #c75050; display: grid; place-items: center; }
.x svg { width: 6px; height: 6px; }
.dbody { display: flex; background: #fff; height: 48px; padding: 15px 13px; gap: 4px; border: 1px solid #eee; border-bottom: 0; }
.dbody svg { width: 19px; height: 19px; }
.dbody p { white-space: nowrap; }
.dfoot { background: #f0f0f0; height: 28px; display: flex; justify-content: flex-end; padding: 7px 6px; }
.dfoot button { width: 49px; height: 14px; border: 1px solid #569de5; background: #e6eef5; }
```
